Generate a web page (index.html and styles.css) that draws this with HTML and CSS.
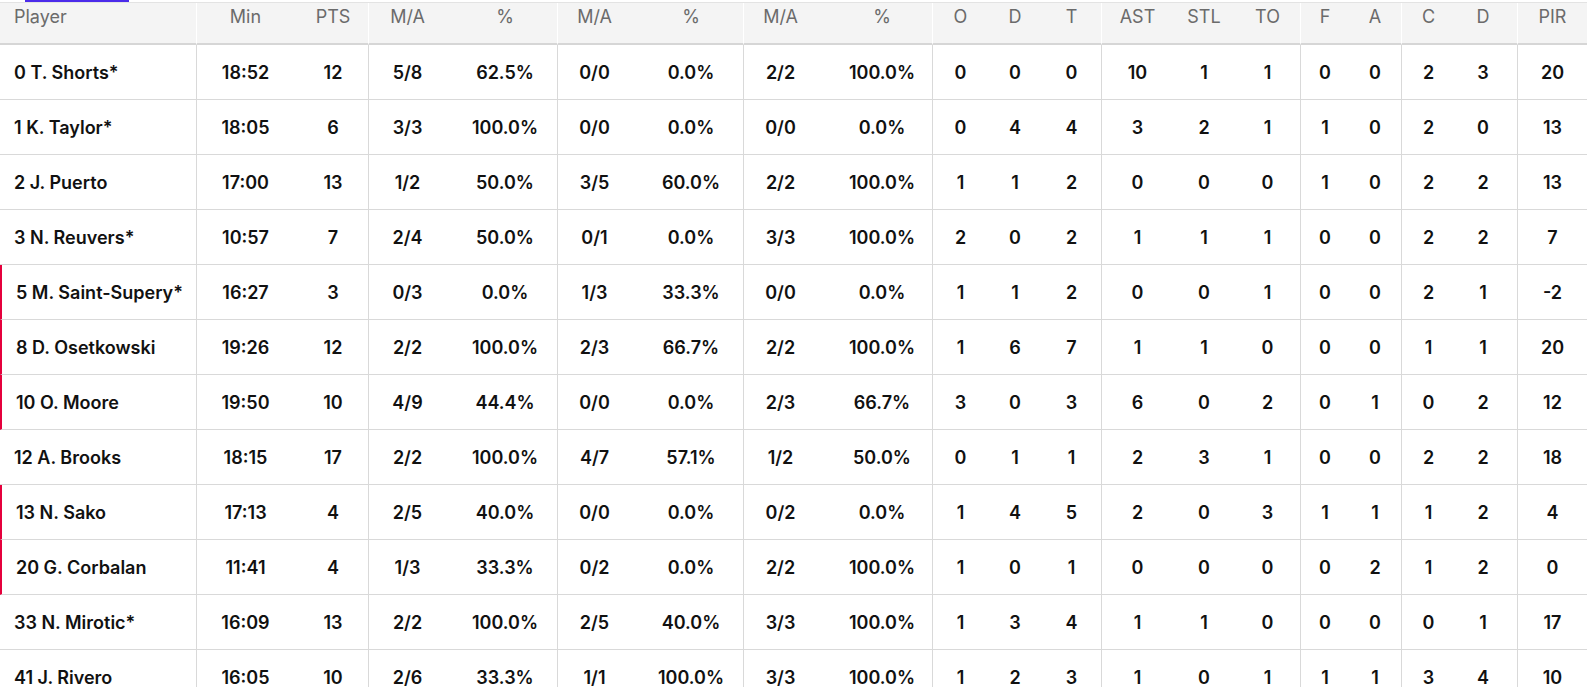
FILE: index.html
```html
<!DOCTYPE html>
<html lang="en">
<head>
<meta charset="utf-8">
<title>Box score</title>
<link rel="stylesheet" href="styles.css">
</head>
<body>
<div class="tabbar"><div class="tab-indicator"></div></div>
<div class="boxscore">
  <div class="row head">
    <div class="cell player">Player</div>
    <div class="cell g">Min</div><div class="cell p4">PTS</div>
    <div class="cell g">M/A</div><div class="cell p7">%</div>
    <div class="cell g">M/A</div><div class="cell p8">%</div>
    <div class="cell g">M/A</div><div class="cell p15">%</div>
    <div class="cell g">O</div><div class="cell">D</div><div class="cell">T</div>
    <div class="cell g">AST</div><div class="cell">STL</div><div class="cell">TO</div>
    <div class="cell g">F</div><div class="cell">A</div>
    <div class="cell g">C</div><div class="cell pr">D</div>
    <div class="cell g">PIR</div>
  </div>

  <div class="row">
    <div class="cell player">0 T. Shorts*</div>
    <div class="cell g">18:52</div><div class="cell p4">12</div>
    <div class="cell g">5/8</div><div class="cell p7">62.5%</div>
    <div class="cell g">0/0</div><div class="cell p8">0.0%</div>
    <div class="cell g">2/2</div><div class="cell p15">100.0%</div>
    <div class="cell g">0</div><div class="cell">0</div><div class="cell">0</div>
    <div class="cell g">10</div><div class="cell">1</div><div class="cell">1</div>
    <div class="cell g">0</div><div class="cell">0</div>
    <div class="cell g">2</div><div class="cell pr">3</div>
    <div class="cell g">20</div>
  </div>

  <div class="row">
    <div class="cell player">1 K. Taylor*</div>
    <div class="cell g">18:05</div><div class="cell p4">6</div>
    <div class="cell g">3/3</div><div class="cell p7">100.0%</div>
    <div class="cell g">0/0</div><div class="cell p8">0.0%</div>
    <div class="cell g">0/0</div><div class="cell p15">0.0%</div>
    <div class="cell g">0</div><div class="cell">4</div><div class="cell">4</div>
    <div class="cell g">3</div><div class="cell">2</div><div class="cell">1</div>
    <div class="cell g">1</div><div class="cell">0</div>
    <div class="cell g">2</div><div class="cell pr">0</div>
    <div class="cell g">13</div>
  </div>

  <div class="row">
    <div class="cell player">2 J. Puerto</div>
    <div class="cell g">17:00</div><div class="cell p4">13</div>
    <div class="cell g">1/2</div><div class="cell p7">50.0%</div>
    <div class="cell g">3/5</div><div class="cell p8">60.0%</div>
    <div class="cell g">2/2</div><div class="cell p15">100.0%</div>
    <div class="cell g">1</div><div class="cell">1</div><div class="cell">2</div>
    <div class="cell g">0</div><div class="cell">0</div><div class="cell">0</div>
    <div class="cell g">1</div><div class="cell">0</div>
    <div class="cell g">2</div><div class="cell pr">2</div>
    <div class="cell g">13</div>
  </div>

  <div class="row">
    <div class="cell player">3 N. Reuvers*</div>
    <div class="cell g">10:57</div><div class="cell p4">7</div>
    <div class="cell g">2/4</div><div class="cell p7">50.0%</div>
    <div class="cell g">0/1</div><div class="cell p8">0.0%</div>
    <div class="cell g">3/3</div><div class="cell p15">100.0%</div>
    <div class="cell g">2</div><div class="cell">0</div><div class="cell">2</div>
    <div class="cell g">1</div><div class="cell">1</div><div class="cell">1</div>
    <div class="cell g">0</div><div class="cell">0</div>
    <div class="cell g">2</div><div class="cell pr">2</div>
    <div class="cell g">7</div>
  </div>

  <div class="row">
    <div class="cell player sub">5 M. Saint-Supery*</div>
    <div class="cell g">16:27</div><div class="cell p4">3</div>
    <div class="cell g">0/3</div><div class="cell p7">0.0%</div>
    <div class="cell g">1/3</div><div class="cell p8">33.3%</div>
    <div class="cell g">0/0</div><div class="cell p15">0.0%</div>
    <div class="cell g">1</div><div class="cell">1</div><div class="cell">2</div>
    <div class="cell g">0</div><div class="cell">0</div><div class="cell">1</div>
    <div class="cell g">0</div><div class="cell">0</div>
    <div class="cell g">2</div><div class="cell pr">1</div>
    <div class="cell g">-2</div>
  </div>

  <div class="row">
    <div class="cell player sub">8 D. Osetkowski</div>
    <div class="cell g">19:26</div><div class="cell p4">12</div>
    <div class="cell g">2/2</div><div class="cell p7">100.0%</div>
    <div class="cell g">2/3</div><div class="cell p8">66.7%</div>
    <div class="cell g">2/2</div><div class="cell p15">100.0%</div>
    <div class="cell g">1</div><div class="cell">6</div><div class="cell">7</div>
    <div class="cell g">1</div><div class="cell">1</div><div class="cell">0</div>
    <div class="cell g">0</div><div class="cell">0</div>
    <div class="cell g">1</div><div class="cell pr">1</div>
    <div class="cell g">20</div>
  </div>

  <div class="row">
    <div class="cell player sub">10 O. Moore</div>
    <div class="cell g">19:50</div><div class="cell p4">10</div>
    <div class="cell g">4/9</div><div class="cell p7">44.4%</div>
    <div class="cell g">0/0</div><div class="cell p8">0.0%</div>
    <div class="cell g">2/3</div><div class="cell p15">66.7%</div>
    <div class="cell g">3</div><div class="cell">0</div><div class="cell">3</div>
    <div class="cell g">6</div><div class="cell">0</div><div class="cell">2</div>
    <div class="cell g">0</div><div class="cell">1</div>
    <div class="cell g">0</div><div class="cell pr">2</div>
    <div class="cell g">12</div>
  </div>

  <div class="row">
    <div class="cell player">12 A. Brooks</div>
    <div class="cell g">18:15</div><div class="cell p4">17</div>
    <div class="cell g">2/2</div><div class="cell p7">100.0%</div>
    <div class="cell g">4/7</div><div class="cell p8">57.1%</div>
    <div class="cell g">1/2</div><div class="cell p15">50.0%</div>
    <div class="cell g">0</div><div class="cell">1</div><div class="cell">1</div>
    <div class="cell g">2</div><div class="cell">3</div><div class="cell">1</div>
    <div class="cell g">0</div><div class="cell">0</div>
    <div class="cell g">2</div><div class="cell pr">2</div>
    <div class="cell g">18</div>
  </div>

  <div class="row">
    <div class="cell player sub">13 N. Sako</div>
    <div class="cell g">17:13</div><div class="cell p4">4</div>
    <div class="cell g">2/5</div><div class="cell p7">40.0%</div>
    <div class="cell g">0/0</div><div class="cell p8">0.0%</div>
    <div class="cell g">0/2</div><div class="cell p15">0.0%</div>
    <div class="cell g">1</div><div class="cell">4</div><div class="cell">5</div>
    <div class="cell g">2</div><div class="cell">0</div><div class="cell">3</div>
    <div class="cell g">1</div><div class="cell">1</div>
    <div class="cell g">1</div><div class="cell pr">2</div>
    <div class="cell g">4</div>
  </div>

  <div class="row">
    <div class="cell player sub">20 G. Corbalan</div>
    <div class="cell g">11:41</div><div class="cell p4">4</div>
    <div class="cell g">1/3</div><div class="cell p7">33.3%</div>
    <div class="cell g">0/2</div><div class="cell p8">0.0%</div>
    <div class="cell g">2/2</div><div class="cell p15">100.0%</div>
    <div class="cell g">1</div><div class="cell">0</div><div class="cell">1</div>
    <div class="cell g">0</div><div class="cell">0</div><div class="cell">0</div>
    <div class="cell g">0</div><div class="cell">2</div>
    <div class="cell g">1</div><div class="cell pr">2</div>
    <div class="cell g">0</div>
  </div>

  <div class="row">
    <div class="cell player">33 N. Mirotic*</div>
    <div class="cell g">16:09</div><div class="cell p4">13</div>
    <div class="cell g">2/2</div><div class="cell p7">100.0%</div>
    <div class="cell g">2/5</div><div class="cell p8">40.0%</div>
    <div class="cell g">3/3</div><div class="cell p15">100.0%</div>
    <div class="cell g">1</div><div class="cell">3</div><div class="cell">4</div>
    <div class="cell g">1</div><div class="cell">1</div><div class="cell">0</div>
    <div class="cell g">0</div><div class="cell">0</div>
    <div class="cell g">0</div><div class="cell pr">1</div>
    <div class="cell g">17</div>
  </div>

  <div class="row">
    <div class="cell player">41 J. Rivero</div>
    <div class="cell g">16:05</div><div class="cell p4">10</div>
    <div class="cell g">2/6</div><div class="cell p7">33.3%</div>
    <div class="cell g">1/1</div><div class="cell p8">100.0%</div>
    <div class="cell g">3/3</div><div class="cell p15">100.0%</div>
    <div class="cell g">1</div><div class="cell">2</div><div class="cell">3</div>
    <div class="cell g">1</div><div class="cell">0</div><div class="cell">1</div>
    <div class="cell g">1</div><div class="cell">1</div>
    <div class="cell g">3</div><div class="cell pr">4</div>
    <div class="cell g">10</div>
  </div>
</div>
</body>
</html>
```

FILE: styles.css
```css
html, body {
  margin: 0;
  padding: 0;
  background: #ffffff;
}

body {
  font-family: Inter, "Liberation Sans", sans-serif;
  color: #111111;
  overflow: hidden;
}

.tabbar {
  height: 2px;
}

.tab-indicator {
  width: 104px;
  height: 2px;
  margin-left: 25px;
  background: #4b2bea;
}

.boxscore {
  width: 1587px;
  border-top: 1px solid #e3e3e3;
}

.row {
  display: grid;
  grid-template-columns: 196px 98px 74px 78px 111px 74px 112px 74px 115px 56px 54px 59px 72px 62px 65px 49px 52px 54px 62px 70px;
}

.cell {
  box-sizing: border-box;
  height: 55px;
  display: flex;
  align-items: center;
  justify-content: center;
  border-bottom: 1px solid #d9d9d9;
  font-size: 18px;
  font-weight: 600;
  white-space: nowrap;
  color: #111111;
}

.cell.g {
  border-left: 1px solid #d9d9d9;
}

.cell.player {
  justify-content: flex-start;
  padding-left: 14px;
}

.cell.sub {
  border-left: 2px solid #e5003c;
}

.cell.p4 { padding-left: 4px; }
.cell.p7 { padding-left: 7px; }
.cell.p8 { padding-left: 8px; }
.cell.p15 { padding-left: 15px; }
.cell.pr { padding-right: 6px; }

.head .cell {
  height: 42px;
  align-items: flex-start;
  padding-top: 3px;
  line-height: 22px;
  background: #f4f4f4;
  border-bottom: 2px solid #d6d6d6;
  font-weight: 400;
  color: #6b6b6b;
}

.head .cell.g {
  border-left-color: #ffffff;
}
```
